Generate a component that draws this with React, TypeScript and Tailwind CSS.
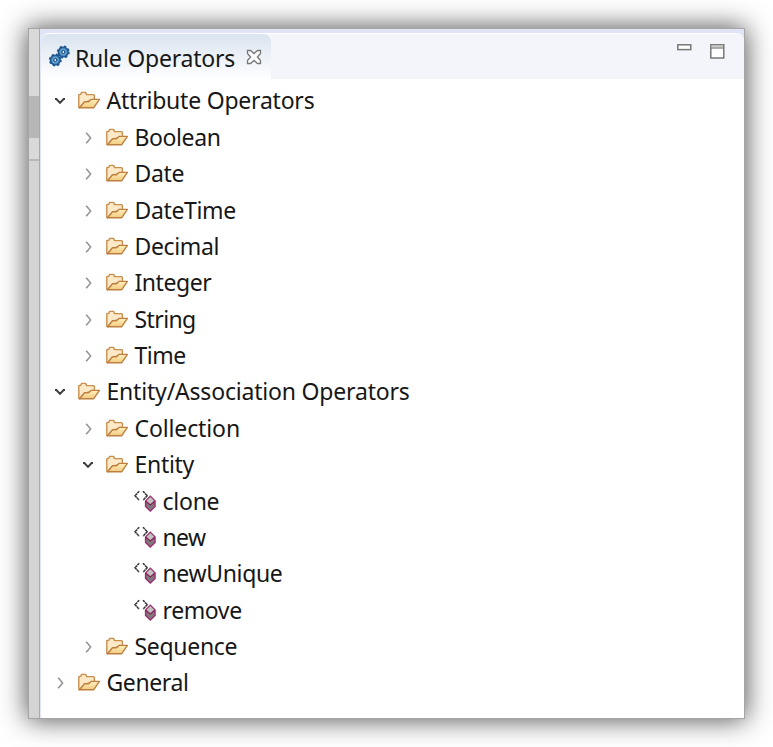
import React from 'react';

type Row = { label: string; depth: number; state: 'open' | 'closed' | 'leaf'; tracking: string };

const rows: Row[] = [
  { label: 'Attribute Operators', depth: 0, state: 'open', tracking: 'tracking-[-0.22px]' },
  { label: 'Boolean', depth: 1, state: 'closed', tracking: 'tracking-[-0.4px]' },
  { label: 'Date', depth: 1, state: 'closed', tracking: 'tracking-[-0.35px]' },
  { label: 'DateTime', depth: 1, state: 'closed', tracking: 'tracking-[-0.35px]' },
  { label: 'Decimal', depth: 1, state: 'closed', tracking: 'tracking-[-0.35px]' },
  { label: 'Integer', depth: 1, state: 'closed', tracking: 'tracking-[-0.45px]' },
  { label: 'String', depth: 1, state: 'closed', tracking: 'tracking-[-0.6px]' },
  { label: 'Time', depth: 1, state: 'closed', tracking: 'tracking-[-0.5px]' },
  { label: 'Entity/Association Operators', depth: 0, state: 'open', tracking: 'tracking-[-0.19px]' },
  { label: 'Collection', depth: 1, state: 'closed', tracking: 'tracking-[-0.12px]' },
  { label: 'Entity', depth: 1, state: 'open', tracking: 'tracking-[-0.3px]' },
  { label: 'clone', depth: 2, state: 'leaf', tracking: 'tracking-[-0.25px]' },
  { label: 'new', depth: 2, state: 'leaf', tracking: 'tracking-[-0.6px]' },
  { label: 'newUnique', depth: 2, state: 'leaf', tracking: 'tracking-[-0.35px]' },
  { label: 'remove', depth: 2, state: 'leaf', tracking: 'tracking-[-0.4px]' },
  { label: 'Sequence', depth: 1, state: 'closed', tracking: 'tracking-[-0.3px]' },
  { label: 'General', depth: 0, state: 'closed', tracking: 'tracking-[-0.4px]' },
];

const indents = ['pl-[11px]', 'pl-[39px]', 'pl-[67px]'];

function Folder() {
  return (
    <svg width="24" height="20" viewBox="0 0 24 20" className="shrink-0">
      <defs>
        <linearGradient id="flap" x1="0" y1="0" x2="0" y2="1">
          <stop offset="0" stopColor="#fff0bd" />
          <stop offset="1" stopColor="#f1cb80" />
        </linearGradient>
      </defs>
      <path d="M1.8 17.5V4.6L3.8 4.2L4.6 2.4H8.6L9.6 4.6H16.4L17.4 5.6V10L8 12L2.6 17.8Z" fill="#fbe9c8" stroke="#c98f4e" strokeWidth="1.4" strokeLinejoin="round" />
      <path d="M2.6 17.8L7.5 11.8H11.5L14 9.4H22.4L16.6 17.8Z" fill="url(#flap)" stroke="#bd8040" strokeWidth="1.4" strokeLinejoin="round" />
    </svg>
  );
}

function Operator() {
  return (
    <svg width="24" height="24" viewBox="0 0 24 24" className="shrink-0">
      <path d="M6.2 2.2L2 6.7L6.2 11.2M10 2.2L14.2 6.7L10 11.2" fill="none" stroke="#333" strokeWidth="1.5" strokeDasharray="2.6 .4" />
      <path d="M17.3 7.2L22 12V17.5L17.3 22L12.6 17.5V12Z" fill="#7c7c7c" stroke="#a02d70" strokeWidth="1.5" />
      <path d="M17.3 8L21.2 12L17.3 15.5L13.4 12Z" fill="#c2c2c2" />
      <path d="M12.8 12.3L17.3 16L21.8 12.3" fill="none" stroke="#8b1d5c" strokeWidth="1.2" />
    </svg>
  );
}

function Gear({ x, y }: { x: number; y: number }) {
  return (
    <g transform={`translate(${x} ${y})`}>
      <circle r="5.5" fill="none" stroke="#2a639a" strokeWidth="2" strokeDasharray="2.3 2.02" />
      <circle r="4.9" fill="#4285bb" stroke="#1b5289" strokeWidth="1.3" />
      <circle r="2.8" fill="none" stroke="#78acd5" strokeWidth=".9" />
      <circle r="1.5" fill="#e4eff6" stroke="#164a7c" strokeWidth="1" />
    </g>
  );
}

function Arrow({ open }: { open: boolean }) {
  return (
    <svg width="16" height="16" viewBox="0 0 16 16" className="shrink-0">
      {open ? (
        <path d="M3 7L4.4 7L8 10.8L11.6 7L13 7" fill="none" stroke="#3d3d3d" strokeWidth="1.9" />
      ) : (
        <path d="M6 4L7.2 4.8L10.6 9L7.2 13.2L6 14" fill="none" stroke="#969696" strokeWidth="1.6" />
      )}
    </svg>
  );
}

export default function App() {
  return (
    <div className="h-[747px] w-[773px] overflow-hidden bg-white pl-[28px] pt-[28px] text-[#171717] [font-family:'Noto_Sans',sans-serif]">
      <div className="flex h-[691px] w-[717px] border border-[#a5a5a5] bg-white shadow-[0_0_25px_1px_rgba(0,0,0,0.68)]">
        <div className="flex w-[11px] shrink-0 flex-col border-r border-[#a7a9ae] bg-[#d4d4d4]">
          <div className="h-[67px] bg-[#d9d9d9]" />
          <div className="h-[42px] bg-[#b7b7b7]" />
          <div className="h-[23px] border-b-2 border-[#b8b8b8] bg-[#d9d9d9]" />
        </div>
        <div className="flex min-w-0 flex-1 flex-col border-l border-[#dfe6f6]">
          <header className="h-[50px] bg-[#dfe4f6] pt-[4px]">
            <div className="flex h-[46px] rounded-t-[8px] border-t border-white bg-[#f4f5fb]">
              <div className="flex w-[230px] items-center rounded-t-[8px] bg-linear-to-b from-[#d9e4ef] to-white pl-[7px]">
                <svg width="24" height="24" viewBox="0 0 24 24" className="mt-[-1px] shrink-0">
                  <Gear x={15.3} y={8} />
                  <Gear x={7.3} y={16} />
                </svg>
                <span className="ml-[3px] mt-[2px] w-[171px] whitespace-nowrap text-[23px] leading-[36px] tracking-[-0.22px]">Rule Operators</span>
                <svg width="16" height="16" viewBox="0 0 16 16" className="shrink-0">
                  <path d="M1.5 1.5H4.5L8 4.6L11.5 1.5H14.5V4.5L11.4 8L14.5 11.5V14.5H11.5L8 11.4L4.5 14.5H1.5V11.5L4.6 8L1.5 4.5Z" fill="white" stroke="#777" strokeWidth="1.3" />
                </svg>
              </div>
              <div className="flex flex-1 items-start justify-end gap-[18px] pr-[19px] pt-[10px]">
                <svg width="15" height="7" viewBox="0 0 15 7"><rect x=".8" y=".8" width="13" height="4.8" fill="white" stroke="#777" strokeWidth="1.5" /></svg>
                <svg width="15" height="15" viewBox="0 0 15 15"><rect x=".8" y=".8" width="13" height="13.2" fill="white" stroke="#777" strokeWidth="1.5" /><path d="M1.5 2.4H13" stroke="#c8c9c4" strokeWidth="1.8" /><path d="M1 4H14" stroke="#777" strokeWidth="1.2" /></svg>
              </div>
            </div>
          </header>
          <main className="pt-[3.3px]">
            {rows.map((row) => (
              <div key={row.label} className={`flex h-[36.375px] items-center ${indents[row.depth]}`}>
                {row.state !== 'leaf' && <Arrow open={row.state === 'open'} />}
                <span className={row.state === 'leaf' ? 'ml-[25px] w-[29.5px]' : 'ml-[9px] w-[29.5px]'}>
                  {row.state === 'leaf' ? <Operator /> : <Folder />}
                </span>
                <span className={`whitespace-nowrap text-[23px] leading-[36px] ${row.tracking}`}>{row.label}</span>
              </div>
            ))}
          </main>
        </div>
      </div>
    </div>
  );
}
